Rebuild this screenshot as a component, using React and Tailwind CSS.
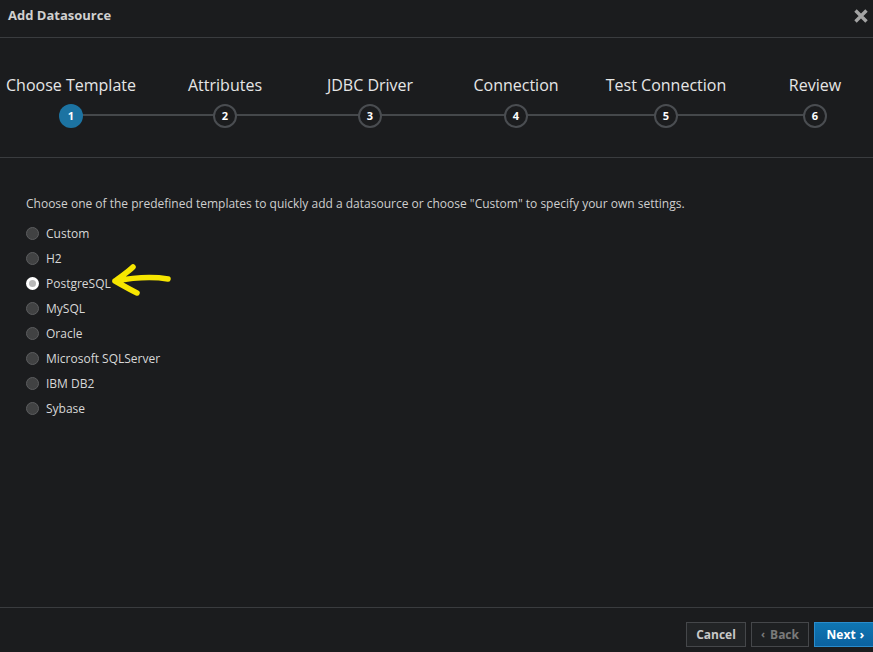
import React, { useState } from "react";

const steps = [
  { label: "Choose Template", ml: "ml-[1px]" },
  { label: "Attributes", ml: "ml-[14px]" },
  { label: "JDBC Driver", ml: "ml-[5px]" },
  { label: "Connection", ml: "ml-[6px]" },
  { label: "Test Connection", ml: "ml-[10px]" },
  { label: "Review", ml: "ml-[9px]" },
];

const templates = [
  "Custom",
  "H2",
  "PostgreSQL",
  "MySQL",
  "Oracle",
  "Microsoft SQLServer",
  "IBM DB2",
  "Sybase",
];

export default function App() {
  const [selected, setSelected] = useState("PostgreSQL");

  return (
    <div
      className="w-[873px] h-[652px] flex flex-col bg-[#1b1c1e] text-[#d8d8d8] overflow-hidden"
      style={{ fontFamily: "'Open Sans', 'Noto Sans', sans-serif" }}
    >
      {/* header */}
      <div className="h-[38px] flex items-center justify-between pl-2 pr-[4px] border-b border-[#3a3c3f]">
        <h1 className="text-[13px] font-bold text-[#d0d0d0] -mt-[6px]">Add Datasource</h1>
        <svg width="16" height="16" viewBox="0 0 16 16" className="-mt-[6px]">
          <path d="M2.5 2.5 L13.5 13.5 M13.5 2.5 L2.5 13.5" stroke="#a3a3a3" strokeWidth="3.4" />
        </svg>
      </div>

      {/* stepper */}
      <div className="h-[120px] border-b border-[#3a3c3f] relative overflow-hidden">
        <div className="absolute left-[70px] w-[744px] top-[76px] h-[2px] bg-[#45484b]" />
        <div className="flex pt-[36px] relative">
          {steps.map((s, i) => (
            <div key={s.label} className={`w-[140px] shrink-0 flex flex-col items-center ${s.ml}`}>
              <span className="text-[16px] leading-[22px] text-[#e6e6e6] whitespace-nowrap">{s.label}</span>
              <span
                className={`mt-[8px] w-[24px] h-[24px] rounded-full flex items-center justify-center text-[11px] font-bold text-white ${
                  i === 0 ? "bg-[#1c73a2]" : "bg-[#1b1c1e] border-2 border-[#4a4d51]"
                }`}
              >
                {i + 1}
              </span>
            </div>
          ))}
        </div>
      </div>

      {/* body */}
      <div className="flex-1 relative px-[26px] pt-[38px]">
        <p className="text-[12px] leading-[16px] text-[#cfcfcf]">
          Choose one of the predefined templates to quickly add a datasource or choose "Custom" to specify your own settings.
        </p>
        <div className="mt-[9px] flex flex-col">
          {templates.map((t) => (
            <label
              key={t}
              className="h-[25px] flex items-center cursor-pointer"
              onClick={() => setSelected(t)}
            >
              <span
                className={`shrink-0 w-[13px] h-[13px] rounded-full flex items-center justify-center ${
                  selected === t ? "bg-white" : "bg-[#414243] border border-[#5c5d5f]"
                }`}
              >
                {selected === t && <span className="w-[7px] h-[7px] rounded-full bg-[#b8b8b8]" />}
              </span>
              <span className="ml-[7px] text-[12px] text-[#d8d8d8]">{t}</span>
            </label>
          ))}
        </div>

        {/* annotation arrow */}
        <svg
          className="absolute left-[104px] top-[102px] pointer-events-none"
          width="74"
          height="44"
          viewBox="0 0 74 44"
        >
          <path
            d="M64 19 C52 17 38 16 11 21 M11 21 C17 16 23 13 29 7 M11 21 C18 25 25 29 33 33"
            stroke="#f7e600"
            strokeWidth="5.5"
            fill="none"
            strokeLinecap="round"
            strokeLinejoin="round"
          />
        </svg>
      </div>

      {/* footer */}
      <div className="h-[45px] border-t border-[#3a3c3f] flex items-start justify-end pt-[14px] gap-[5px] -mr-[4px]">
        <button className="h-[25px] w-[60px] border border-[#45474a] bg-[#222426] text-[12px] font-bold text-[#c8c8c8]">
          Cancel
        </button>
        <button className="h-[25px] w-[58px] border border-[#45474a] bg-[#1e2022] text-[12px] font-bold text-[#7a7a7a] flex items-center justify-center gap-[5px]">
          <span className="text-[11px]">‹</span>Back
        </button>
        <button className="h-[25px] w-[63px] border border-[#2a8ccc] bg-gradient-to-b from-[#0f76b3] to-[#0b62a0] text-[12px] font-bold text-white flex items-center justify-center gap-[4px]">
          Next<span className="text-[13px]">›</span>
        </button>
      </div>
    </div>
  );
}
